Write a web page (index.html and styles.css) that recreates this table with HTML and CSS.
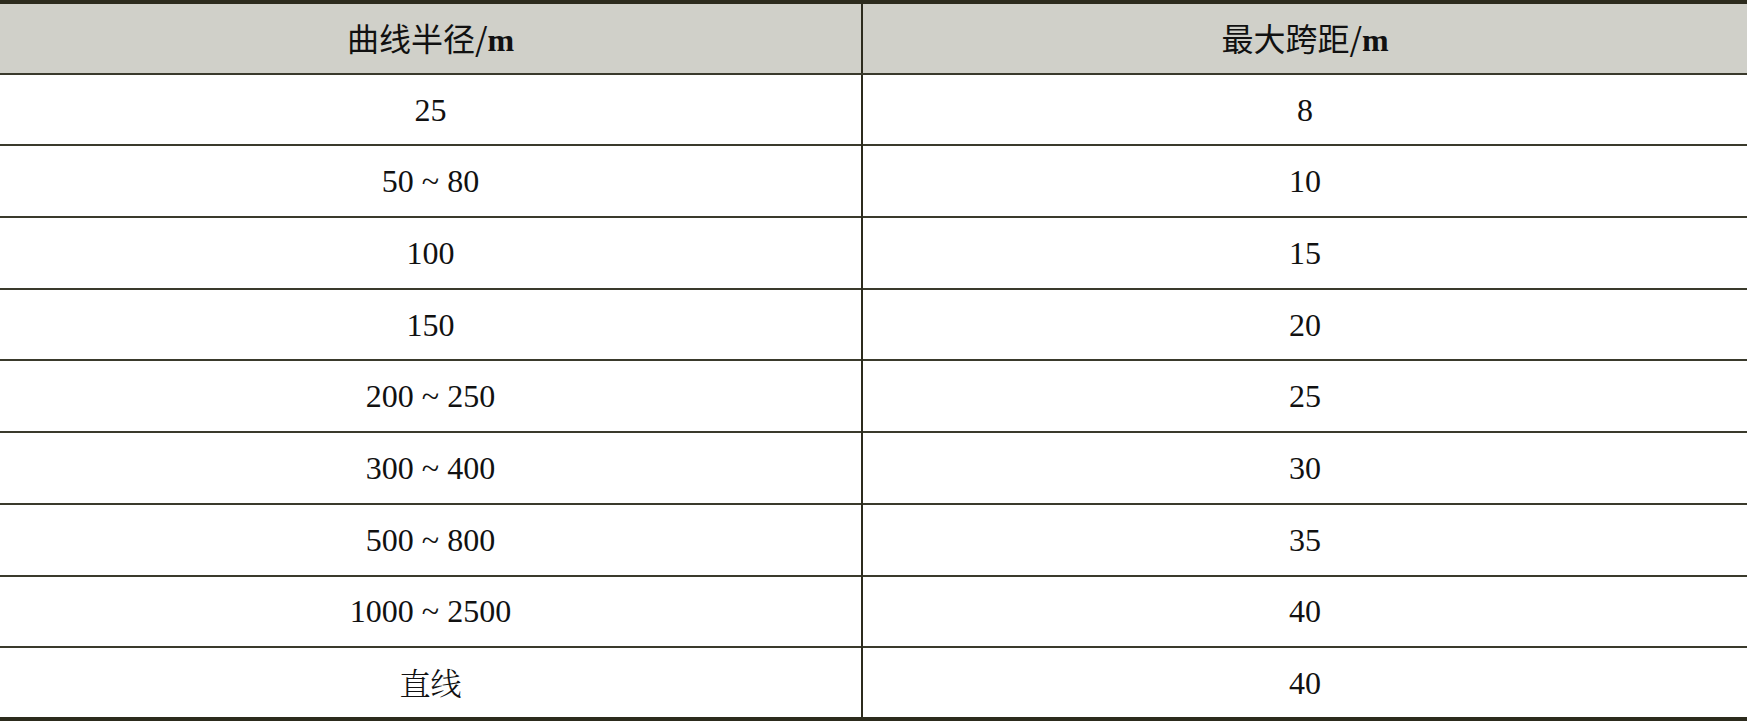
FILE: index.html
```html
<!DOCTYPE html>
<html lang="zh">
<head>
<meta charset="utf-8">
<title>曲线半径与最大跨距</title>
<link rel="stylesheet" href="styles.css">
</head>
<body>
<table class="spec">
  <thead>
    <tr>
      <th class="col-left"><span class="cjk">曲线半径/</span><span class="unit">m</span></th>
      <th><span class="cjk">最大跨距/</span><span class="unit">m</span></th>
    </tr>
  </thead>
  <tbody>
    <tr><td class="col-left">25</td><td>8</td></tr>
    <tr><td class="col-left">50 ~ 80</td><td>10</td></tr>
    <tr><td class="col-left">100</td><td>15</td></tr>
    <tr><td class="col-left">150</td><td>20</td></tr>
    <tr><td class="col-left">200 ~ 250</td><td>25</td></tr>
    <tr><td class="col-left">300 ~ 400</td><td>30</td></tr>
    <tr><td class="col-left">500 ~ 800</td><td>35</td></tr>
    <tr><td class="col-left">1000 ~ 2500</td><td>40</td></tr>
    <tr><td class="col-left"><span class="cjk-cell">直线</span></td><td>40</td></tr>
  </tbody>
</table>
</body>
</html>
```
FILE: styles.css
```css
html, body {
  margin: 0;
  padding: 0;
  background: #ffffff;
}

.spec {
  width: 1747px;
  border-collapse: collapse;
  table-layout: fixed;
  border-top: 4px solid #2c2b1d;
  border-bottom: 4px solid #2c2b1d;
  font-family: "Liberation Serif", "Noto Serif CJK SC", "Noto Sans CJK SC", serif;
  color: #111111;
}

.spec tr {
  height: 71.7px;
}

.spec th,
.spec td {
  padding: 0;
  text-align: center;
  vertical-align: middle;
  font-size: 32px;
  line-height: 36px;
  border-top: 2px solid #3a3a2c;
}

.spec thead th {
  border-top: none;
  background: #d0d0c9;
  font-weight: normal;
  border-bottom: 2px solid #3a3a2c;
}

.spec .col-left {
  width: 861px;
  border-right: 2px solid #2c2b1d;
}

.cjk {
  font-family: "Noto Sans CJK SC", sans-serif;
  font-size: 32px;
}

.cjk-cell {
  font-family: "Noto Serif CJK SC", "Noto Sans CJK SC", serif;
  font-weight: 300;
  font-size: 31px;
}

.unit {
  font-family: "Liberation Serif", serif;
  font-weight: bold;
  font-size: 32px;
}
```
